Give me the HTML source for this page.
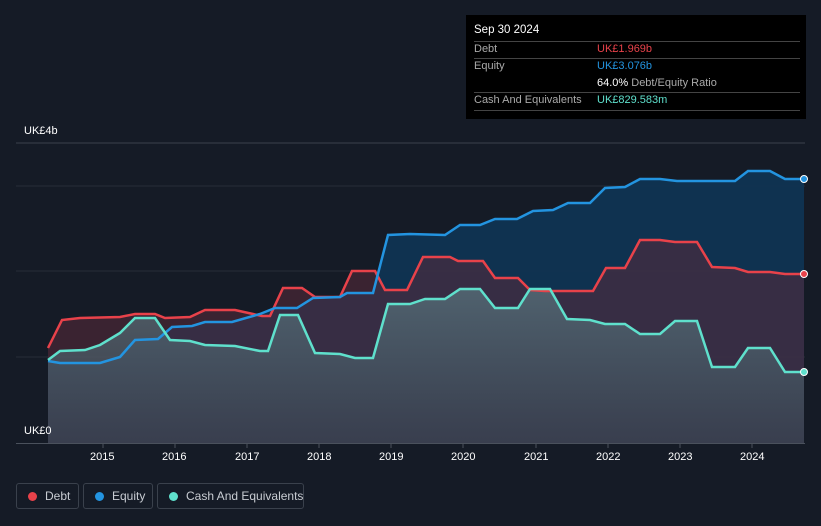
<!DOCTYPE html>
<html style="overflow:hidden"><head><meta charset="utf-8"><style>
html,body{margin:0;overflow:hidden}
body{background:#151b26;width:821px;height:526px;font-family:"Liberation Sans",sans-serif;position:relative}
.tt{position:absolute;left:466px;top:15px;width:340px;height:104px;background:#000;color:#fff;font-size:11px}
.tt .r{position:absolute;left:8px;right:6px;border-top:1px solid #444}
.tt span{position:absolute;white-space:nowrap}
.lg{position:absolute;top:483px;height:26px;border:1px solid #3a414c;border-radius:3px;color:#c8ccd2;font-size:12px;line-height:26px;box-sizing:border-box;white-space:nowrap}
.lg i{position:absolute;left:11px;top:8px;width:9px;height:9px;border-radius:50%}
.lg b{font-weight:normal;position:absolute;left:28px;top:-1px;white-space:nowrap}
.ax{position:absolute;color:#fff;font-size:11px}
</style></head><body>
<svg width="821" height="526" style="position:absolute;left:0;top:0">
<defs><linearGradient id="cg" x1="0" y1="0" x2="0" y2="1"><stop offset="0" stop-color="#5a7880" stop-opacity="0.7"/><stop offset="1" stop-color="#3a4a55" stop-opacity="0.6"/></linearGradient></defs>
<line x1="16" y1="143" x2="805" y2="143" stroke="#3a414c"/>
<line x1="16" y1="186" x2="805" y2="186" stroke="#262d38"/>
<line x1="16" y1="271" x2="805" y2="271" stroke="#262d38"/>
<line x1="16" y1="357" x2="805" y2="357" stroke="#262d38"/>
<polygon fill="#0f3452" opacity="0.95" points="48,443 48,361 60,363 100,363 120,357 135,340 158,339 172,327 192,326 205,322 232,322 260,314 275,308 297,308 313,298 340,297 347,293 373,293 388,235 410,234 445,235 460,225 480,225 495,219 517,219 533,211 553,210 568,203 590,203 605,188 625,187 640,179 660,179 677,181 735,181 748,171 770,171 785,179 804,179 804,443"/>
<polygon fill="#5a2a3a" opacity="0.55" points="48,443 48,348 62,320 80,318 120,317 135,314 155,314 165,318 190,317 205,310 235,310 262,316 270,316 283,288 302,288 315,297 340,297 352,271 375,271 385,290 407,290 423,257 450,257 458,261 483,261 495,278 518,278 530,290 545,291 593,291 606,268 625,268 640,240 660,240 675,242 697,242 712,267 735,268 748,272 770,272 785,274 804,274 804,443"/>
<polygon fill="url(#cg)" points="48,443 48,360 60,351 85,350 100,345 120,333 135,318 155,318 170,340 190,341 205,345 235,346 260,351 268,351 280,315 298,315 315,353 340,354 355,358 373,358 388,304 410,304 425,299 445,299 460,289 480,289 495,308 518,308 530,289 550,289 567,319 590,320 605,324 625,324 640,334 660,334 675,321 697,321 712,367 735,367 748,348 770,348 785,372 804,372 804,443"/>
<polyline fill="none" stroke="#e8424a" stroke-width="2.5" points="48,348 62,320 80,318 120,317 135,314 155,314 165,318 190,317 205,310 235,310 262,316 270,316 283,288 302,288 315,297 340,297 352,271 375,271 385,290 407,290 423,257 450,257 458,261 483,261 495,278 518,278 530,290 545,291 593,291 606,268 625,268 640,240 660,240 675,242 697,242 712,267 735,268 748,272 770,272 785,274 804,274"/>
<polyline fill="none" stroke="#2394e0" stroke-width="2.5" points="48,361 60,363 100,363 120,357 135,340 158,339 172,327 192,326 205,322 232,322 260,314 275,308 297,308 313,298 340,297 347,293 373,293 388,235 410,234 445,235 460,225 480,225 495,219 517,219 533,211 553,210 568,203 590,203 605,188 625,187 640,179 660,179 677,181 735,181 748,171 770,171 785,179 804,179"/>
<polyline fill="none" stroke="#5fe0cc" stroke-width="2.5" points="48,360 60,351 85,350 100,345 120,333 135,318 155,318 170,340 190,341 205,345 235,346 260,351 268,351 280,315 298,315 315,353 340,354 355,358 373,358 388,304 410,304 425,299 445,299 460,289 480,289 495,308 518,308 530,289 550,289 567,319 590,320 605,324 625,324 640,334 660,334 675,321 697,321 712,367 735,367 748,348 770,348 785,372 804,372"/>
<circle cx="804" cy="179" r="3.5" fill="#2394e0" stroke="#fff" stroke-width="1"/>
<circle cx="804" cy="274" r="3.5" fill="#e8424a" stroke="#fff" stroke-width="1"/>
<circle cx="804" cy="372" r="3.5" fill="#5fe0cc" stroke="#fff" stroke-width="1"/>
<line x1="16" y1="443.5" x2="805" y2="443.5" stroke="#4a515c"/>
<g stroke="#4a515c"><line x1="103" y1="443" x2="103" y2="448"/><line x1="175" y1="443" x2="175" y2="448"/><line x1="247" y1="443" x2="247" y2="448"/><line x1="319" y1="443" x2="319" y2="448"/><line x1="391" y1="443" x2="391" y2="448"/><line x1="463" y1="443" x2="463" y2="448"/><line x1="536" y1="443" x2="536" y2="448"/><line x1="608" y1="443" x2="608" y2="448"/><line x1="680" y1="443" x2="680" y2="448"/><line x1="752" y1="443" x2="752" y2="448"/></g>
</svg>
<div class="ax" style="left:24px;top:125px">UK£4b</div>
<div class="ax" style="left:24px;top:425px">UK£0</div>
<div class="ax" style="left:90px;top:451px">2015</div><div class="ax" style="left:162px;top:451px">2016</div><div class="ax" style="left:235px;top:451px">2017</div><div class="ax" style="left:307px;top:451px">2018</div><div class="ax" style="left:379px;top:451px">2019</div><div class="ax" style="left:451px;top:451px">2020</div><div class="ax" style="left:524px;top:451px">2021</div><div class="ax" style="left:596px;top:451px">2022</div><div class="ax" style="left:668px;top:451px">2023</div><div class="ax" style="left:740px;top:451px">2024</div>
<div class="tt">
<span style="left:8px;top:9px;font-size:11.5px">Sep 30 2024</span>
<div class="r" style="top:26px"></div>
<span style="left:8px;top:28px;color:#aaa">Debt</span><span style="left:131px;top:28px;color:#e8424a">UK£1.969b</span>
<div class="r" style="top:43px"></div>
<span style="left:8px;top:45px;color:#aaa">Equity</span><span style="left:131px;top:45px;color:#2394e0">UK£3.076b</span>
<span style="left:131px;top:62px;color:#fff">64.0% <span style="position:static;color:#aaa">Debt/Equity Ratio</span></span>
<div class="r" style="top:77px"></div>
<span style="left:8px;top:79px;color:#aaa">Cash And Equivalents</span><span style="left:131px;top:79px;color:#5fe0cc">UK£829.583m</span>
<div class="r" style="top:95px"></div>
</div>
<div class="lg" style="left:16px;width:63px"><i style="background:#e8424a"></i><b>Debt</b></div>
<div class="lg" style="left:83px;width:70px"><i style="background:#2394e0"></i><b>Equity</b></div>
<div class="lg" style="left:157px;width:147px"><i style="background:#5fe0cc"></i><b>Cash And Equivalents</b></div>
</body></html>
